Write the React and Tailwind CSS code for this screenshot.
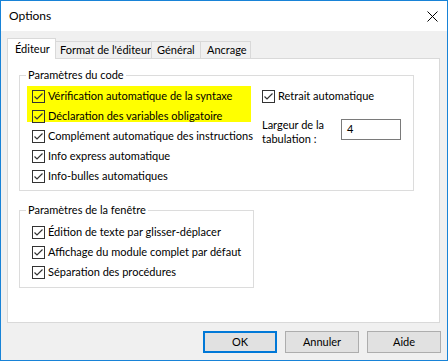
import React from "react";

const FONT = { fontFamily: 'Lato, "Noto Sans", "Liberation Sans", sans-serif' };

function Check() {
  return (
    <svg width="13" height="13" viewBox="0 0 13 13" className="shrink-0">
      <rect x="0.5" y="0.5" width="12" height="12" fill="none" stroke="#333333" strokeWidth="1" />
      <polyline points="2.5,6.5 5,9 10.5,3.5" fill="none" stroke="#333333" strokeWidth="1.2" />
    </svg>
  );
}

function Row({ children }) {
  return (
    <div className="flex items-center h-[20px] gap-[3px] whitespace-nowrap">
      <Check />
      <span className="leading-[16px]">{children}</span>
    </div>
  );
}

export default function App() {
  return (
    <div
      className="w-[448px] h-[361px] border border-[#1883d7] flex flex-col text-[11px] text-black bg-[#f0f0f0] whitespace-nowrap"
      style={FONT}
    >
      {/* Title bar */}
      <div className="h-[30px] bg-white flex items-center justify-between pl-[8px] pr-[9px] shrink-0">
        <span className="leading-[16px] text-[12px]">Options</span>
        <svg width="11" height="11" viewBox="0 0 11 11">
          <line x1="0.5" y1="0.5" x2="10.5" y2="10.5" stroke="#000" strokeWidth="1" />
          <line x1="10.5" y1="0.5" x2="0.5" y2="10.5" stroke="#000" strokeWidth="1" />
        </svg>
      </div>

      {/* Tabs */}
      <div className="flex items-end ml-[6px] mt-[7px] h-[20px] relative z-10">
        <div className="w-[49px] h-[21px] bg-white border border-b-0 border-[#d9d9d9] pl-[7px] pt-[2px] leading-[16px] -mb-[1px]">
          Éditeur
        </div>
        <div className="w-[96px] h-[17px] border-t border-r border-[#d9d9d9] pl-[4px] leading-[16px] overflow-hidden">
          Format de l'éditeur
        </div>
        <div className="w-[49px] h-[17px] border-t border-r border-[#d9d9d9] pl-[5px] leading-[16px] overflow-hidden">
          Général
        </div>
        <div className="w-[50px] h-[17px] border-t border-r border-[#d9d9d9] pl-[6px] leading-[16px] overflow-hidden">
          Ancrage
        </div>
      </div>

      {/* Panel */}
      <div className="ml-[6px] mr-[7px] h-[265px] bg-white border border-[#d9d9d9] pl-[11px] pt-[8px]">
        <fieldset className="w-[395px] min-w-0 h-[124px] border border-[#dcdcdc] px-0">
          <legend className="ml-[6px] px-[2px] leading-[16px]">Paramètres du code</legend>
          <div className="flex mt-[3px]">
            <div className="w-[242px] shrink-0">
              <div className="ml-[7px] w-[224px] h-[36px] bg-[#ffff00] pl-[5px]">
                <Row>Vérification automatique de la syntaxe</Row>
                <Row>Déclaration des variables obligatoire</Row>
              </div>
              <div className="pl-[12px] mt-[4px]">
                <Row>Complément automatique des instructions</Row>
                <Row>Info express automatique</Row>
                <Row>Info-bulles automatiques</Row>
              </div>
            </div>
            <div className="flex flex-col">
              <Row>Retrait automatique</Row>
              <div className="flex mt-[12px]">
                <div className="w-[79px] leading-[14px]">
                  Largeur de la
                  <br />
                  tabulation :
                </div>
                <div className="w-[60px] h-[21px] border border-[#7a7a7a] flex items-center pl-[5px] mt-[1px]">
                  4
                </div>
              </div>
            </div>
          </div>
        </fieldset>

        <fieldset className="w-[235px] min-w-0 h-[86px] mt-[11px] border border-[#dcdcdc] px-0">
          <legend className="ml-[6px] px-[2px] leading-[16px]">Paramètres de la fenêtre</legend>
          <div className="pl-[12px] mt-[4px]">
            <Row>Édition de texte par glisser-déplacer</Row>
            <Row>Affichage du module complet par défaut</Row>
            <Row>Séparation des procédures</Row>
          </div>
        </fieldset>
      </div>

      {/* Buttons */}
      <div className="flex justify-end gap-[8px] mt-[8px] pr-[6px]">
        <button className="w-[74px] h-[22px] bg-[#e1e1e1] border-2 border-[#0078d7] leading-[16px]">OK</button>
        <button className="w-[74px] h-[22px] bg-[#e1e1e1] border border-[#adadad] leading-[16px]">Annuler</button>
        <button className="w-[74px] h-[22px] bg-[#e1e1e1] border border-[#adadad] leading-[16px]">Aide</button>
      </div>
    </div>
  );
}
